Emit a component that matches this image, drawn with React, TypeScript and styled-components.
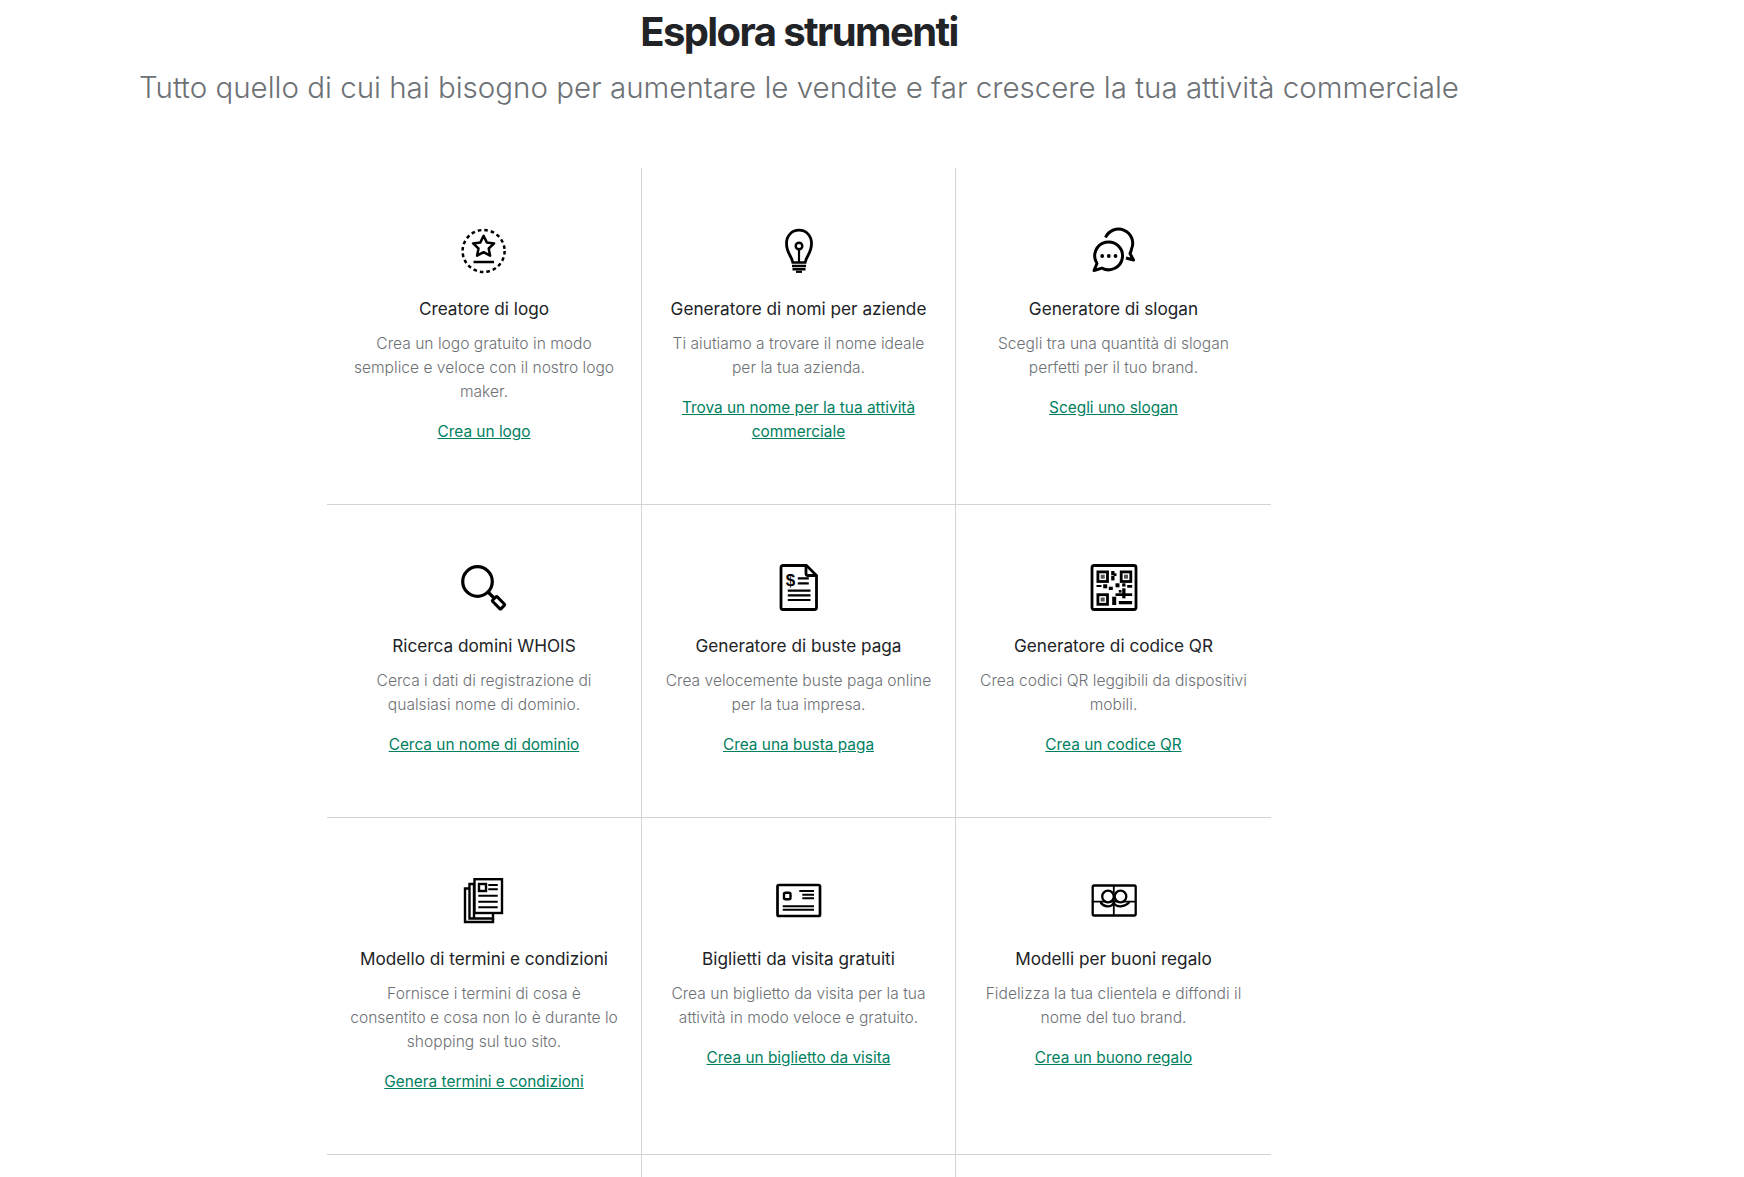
import React from "react";
import styled, { createGlobalStyle } from "styled-components";

const Global = createGlobalStyle`
  html, body { margin: 0; padding: 0; background: #fff; overflow: hidden; }
  body { font-family: Inter, "Liberation Sans", sans-serif; }
`;

const Page = styled.main`
  width: 1598px;
  height: 1177px;
  overflow: hidden;
`;
const Header = styled.header`
  text-align: center;
`;
const Heading = styled.h1`
  margin: 0;
  padding-top: 8px;
  font-size: 40px;
  line-height: 48px;
  font-weight: 700;
  letter-spacing: -1.6px;
  color: #212326;
`;
const Subtitle = styled.p`
  margin: 11px 0 0;
  font-size: 29.5px;
  line-height: 40px;
  font-weight: 300;
  color: #6d7175;
`;
const Grid = styled.section`
  display: grid;
  grid-template-columns: 315px 314px 315px;
  width: 944px;
  margin: 61px auto 0;
`;
const Cell = styled.article<{ $col: number; $last?: boolean }>`
  box-sizing: border-box;
  padding: 59px 22px 60px;
  text-align: center;
  border-right: ${(p) => (p.$col < 2 ? "1px solid #d2d5d8" : "none")};
  border-bottom: ${(p) => (p.$last ? "none" : "1px solid #d2d5d8")};
`;
const IconBox = styled.div`
  width: 48px;
  height: 48px;
  margin: 0 auto;
  svg { display: block; }
`;
const Title = styled.h3`
  margin: 22px 0 0;
  font-size: 17.2px;
  line-height: 24px;
  font-weight: 430;
  color: #212326;
`;
const Desc = styled.p`
  margin: 11px 0 0;
  font-size: 15.6px;
  line-height: 24px;
  font-weight: 300;
  color: #6d7175;
`;
const Action = styled.a`
  display: block;
  margin-top: 16px;
  font-size: 15.4px;
  line-height: 24px;
  font-weight: 400;
  color: #008060;
  text-decoration: underline;
`;

const Svg: React.FC<{ children: React.ReactNode; w?: number; dx?: number; dy?: number }> = ({ children, w = 2.5, dx = 0, dy = 0 }) => (
  <svg width="48" height="48" viewBox={`${dx} ${dy} 48 48`} fill="none" stroke="#000" strokeWidth={w}>
    {children}
  </svg>
);

const starPts = (() => {
  const pts: string[] = [];
  for (let i = 0; i < 10; i++) {
    const r = i % 2 === 0 ? 11 : 5.4;
    const a = -Math.PI / 2 + (i * Math.PI) / 5;
    pts.push(`${(23.6 + r * Math.cos(a)).toFixed(1)},${(19.8 + r * Math.sin(a)).toFixed(1)}`);
  }
  return pts.join(" ");
})();

const LogoIcon = () => (
  <Svg>
    <circle cx="23.6" cy="24" r="21" strokeDasharray="3.6 3" />
    <polygon points={starPts} strokeLinejoin="round" />
    <path d="M13.500 35h20.500" />
  </Svg>
);
const BulbIcon = () => (
  <Svg w={2.8}>
    <path d="M17.500 35c0-5-6-8.500-6-18.500C11.500 8.500 17 3.200 24 3.200s12.500 5.300 12.500 13.300c0 10-6 13.500-6 18.500" />
    <circle cx="24" cy="19" r="3.300" strokeWidth="2.400" />
    <path d="M24 22v13" strokeWidth="2.200" />
    <path d="M16.500 35.500h15M17 39h14M17.500 42.300h13" strokeWidth="2.400" />
    <path d="M21 44.800h6" strokeWidth="2.200" />
  </Svg>
);
const ChatIcon = () => (
  <Svg w={3} dx={0.5}>
    <path d="M4.500 43.500l3-7a13.900 13.900 0 1 1 5 4.600z" strokeLinejoin="round" />
    <path d="M16 10.500A14 14 0 0 1 42 22c-.3 2-1 3.500-1.500 4.500l3.500 6.500-7.500-2" strokeLinejoin="round" />
    <circle cx="12.700" cy="29" r="1.900" fill="#000" stroke="none" />
    <circle cx="19.300" cy="29" r="1.900" fill="#000" stroke="none" />
    <circle cx="26" cy="29" r="1.900" fill="#000" stroke="none" />
  </Svg>
);
const SearchIcon = () => (
  <Svg w={3.2}>
    <circle cx="17.500" cy="17.500" r="14.800" />
    <path d="M28 28l5.500 5.500" />
    <rect x="32.500" y="35.500" width="12" height="6.500" rx="1" transform="rotate(45 38.500 38.750)" strokeWidth="3" />
  </Svg>
);
const InvoiceIcon = () => (
  <Svg w={2.8} dy={1}>
    <path d="M31.500 2.500H8a2 2 0 0 0-2 2v40a2 2 0 0 0 2 2h31.500a2 2 0 0 0 2-2V12.500z" strokeLinejoin="round" />
    <path d="M31 3v7.500a2 2 0 0 0 2 2h8" />
    <text x="15.500" y="23" textAnchor="middle" fontFamily="'Liberation Sans', sans-serif" fontSize="17" fontWeight="700" fill="#000" stroke="none">$</text>
    <path d="M22.800 15.300h11M22.800 20.300h11M12.800 27.700h22.700M12.800 32.300h22.700M12.800 37h22.700" strokeWidth="2.200" />
  </Svg>
);
const qrBlocks: [number, number, number, number][] = [
  [21.7, 8, 3.3, 4], [21.7, 12.7, 3.3, 4.7], [24.3, 10.3, 2.7, 2.7],
  [7, 22, 5, 2], [13.7, 21.3, 4, 4], [19.3, 23.7, 4, 3.3], [26, 20.3, 4, 4], [32.7, 20.3, 3.3, 3.3], [37.7, 22, 5, 2.7],
  [32.7, 25.3, 3.3, 10], [26, 30.3, 16.7, 2.7], [22.7, 33.7, 4, 8.3], [29.3, 38, 13.3, 3.3], [29.3, 27, 2.7, 2.7],
];
const QrIcon = () => (
  <Svg w={2.8} dx={0.5} dy={1}>
    <rect x="2.500" y="2.500" width="44" height="44" rx="2" />
    {[[7, 7.500], [30.300, 7.500], [7, 30.300]].map(([x, y]) => (
      <g key={`${x}-${y}`}>
        <rect x={x + 1.400} y={y + 1.400} width="9.600" height="9.600" strokeWidth="2.800" />
        <rect x={x + 4.200} y={y + 4.200} width="4" height="4" fill="#555" stroke="none" />
      </g>
    ))}
    {qrBlocks.map(([x, y, w, h]) => (
      <rect key={`${x}-${y}`} x={x} y={y} width={w} height={h} fill="#000" stroke="none" />
    ))}
  </Svg>
);
const PagesIcon = () => (
  <Svg w={2.4} dy={1}>
    <path d="M14 42V8h-4.500v34.500H33V37.500" />
    <path d="M9.500 12.500H5v33.500h28v-3.500" />
    <rect x="14.500" y="3.200" width="27.500" height="33.800" fill="#fff" />
    <rect x="19" y="8" width="7" height="7" />
    <path d="M28.300 9h9.500M28.300 13.200h9.500M18.300 19.700h19.400M18.300 25.700h19.400M18.300 31.300h19.400" strokeWidth="2" />
  </Svg>
);
const CardIcon = () => (
  <Svg w={2.7} dx={0.5} dy={1}>
    <rect x="3" y="9" width="42.500" height="31" rx="1.500" />
    <rect x="9.500" y="16.800" width="6.500" height="6.500" rx="1.500" strokeWidth="2.400" />
    <path d="M24.800 15h14.700M27.800 18.800h11.700M27.800 22.300h11.700M8.200 30.300h31.300M8.200 33.800h31.300" strokeWidth="2" />
  </Svg>
);
const GiftIcon = () => (
  <Svg w={2.3} dx={0.5} dy={1}>
    <rect x="3.200" y="9.500" width="43" height="30" rx="1.500" />
    <path d="M24.300 9.500v30M3.200 25.700h43" strokeWidth="1.800" />
    <circle cx="18.500" cy="20.500" r="5.800" fill="#fff" />
    <circle cx="31" cy="20.500" r="5.800" fill="#fff" />
    <path d="M11.500 27c3 4 10 5 12.800 0 2.800 5 11 4 15-.2" strokeLinecap="round" />
  </Svg>
);

type Tool = { Icon: React.FC; title: string; desc: string; link: string };
const tools: Tool[] = [
  { Icon: LogoIcon, title: "Creatore di logo", desc: "Crea un logo gratuito in modo semplice e veloce con il nostro logo maker.", link: "Crea un logo" },
  { Icon: BulbIcon, title: "Generatore di nomi per aziende", desc: "Ti aiutiamo a trovare il nome ideale per la tua azienda.", link: "Trova un nome per la tua attività commerciale" },
  { Icon: ChatIcon, title: "Generatore di slogan", desc: "Scegli tra una quantità di slogan perfetti per il tuo brand.", link: "Scegli uno slogan" },
  { Icon: SearchIcon, title: "Ricerca domini WHOIS", desc: "Cerca i dati di registrazione di qualsiasi nome di dominio.", link: "Cerca un nome di dominio" },
  { Icon: InvoiceIcon, title: "Generatore di buste paga", desc: "Crea velocemente buste paga online per la tua impresa.", link: "Crea una busta paga" },
  { Icon: QrIcon, title: "Generatore di codice QR", desc: "Crea codici QR leggibili da dispositivi mobili.", link: "Crea un codice QR" },
  { Icon: PagesIcon, title: "Modello di termini e condizioni", desc: "Fornisce i termini di cosa è consentito e cosa non lo è durante lo shopping sul tuo sito.", link: "Genera termini e condizioni" },
  { Icon: CardIcon, title: "Biglietti da visita gratuiti", desc: "Crea un biglietto da visita per la tua attività in modo veloce e gratuito.", link: "Crea un biglietto da visita" },
  { Icon: GiftIcon, title: "Modelli per buoni regalo", desc: "Fidelizza la tua clientela e diffondi il nome del tuo brand.", link: "Crea un buono regalo" },
];

export default function App() {
  return (
    <Page>
      <Global />
      <Header>
        <Heading>Esplora strumenti</Heading>
        <Subtitle>Tutto quello di cui hai bisogno per aumentare le vendite e far crescere la tua attività commerciale</Subtitle>
      </Header>
      <Grid>
        {tools.map(({ Icon, title, desc, link }, i) => (
          <Cell key={title} $col={i % 3}>
            <IconBox><Icon /></IconBox>
            <Title>{title}</Title>
            <Desc>{desc}</Desc>
            <Action href="#">{link}</Action>
          </Cell>
        ))}
        {[0, 1, 2].map((c) => (
          <Cell key={c} $col={c} $last />
        ))}
      </Grid>
    </Page>
  );
}
